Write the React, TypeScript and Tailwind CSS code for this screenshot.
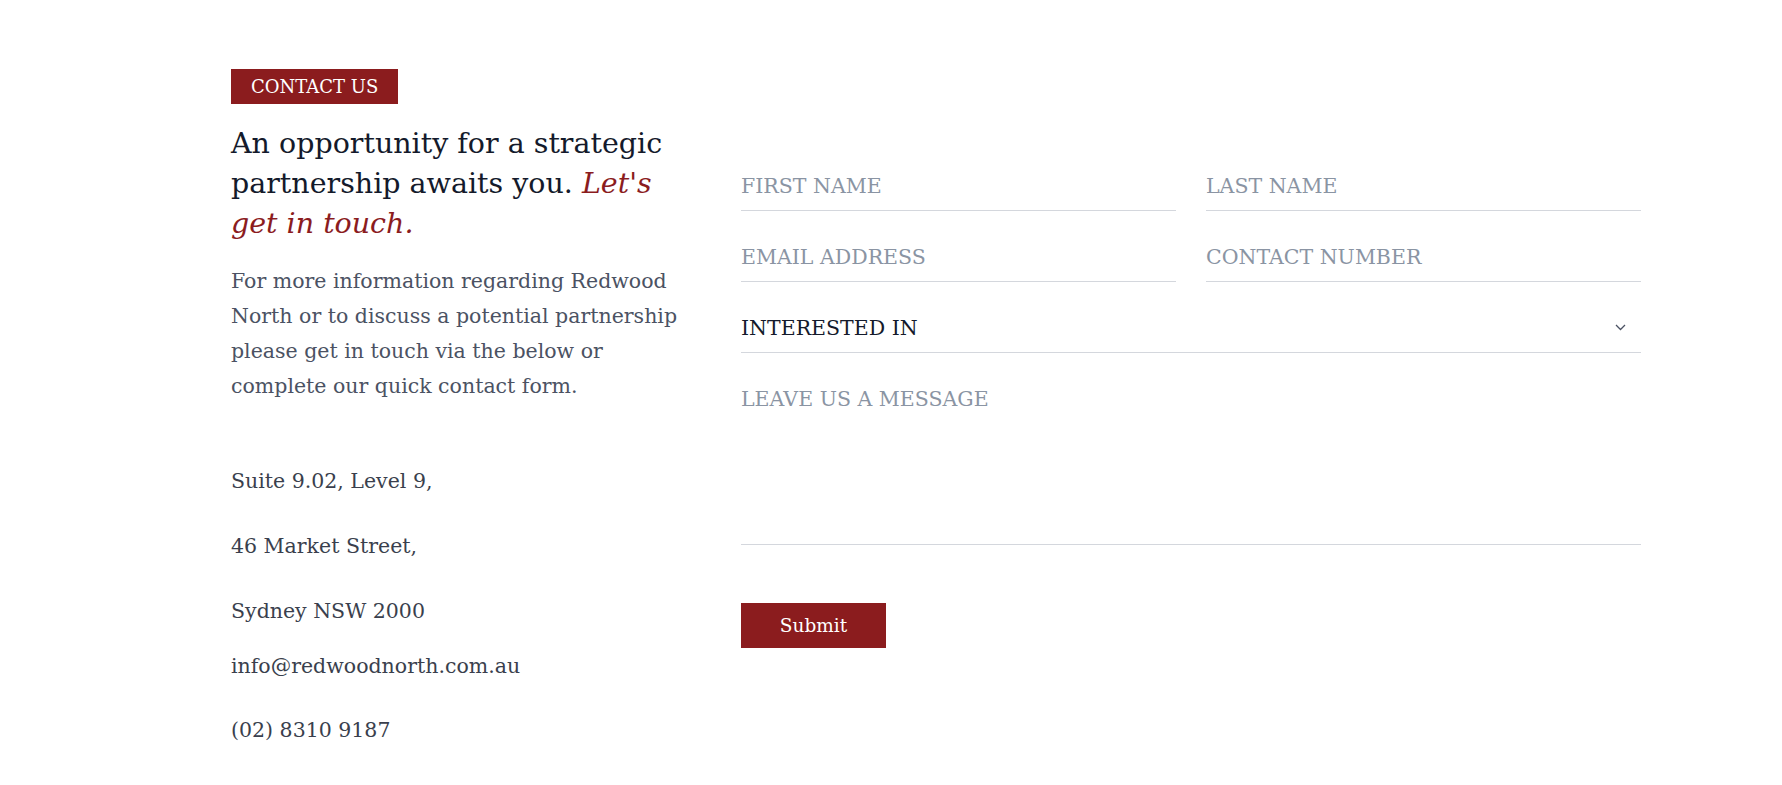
import { useState } from "react";

const SERIF = "font-['DejaVu_Serif',serif]";

const inputCls =
  "w-full h-[51px] pt-[2px] border-0 border-b border-[#d4d7dd] bg-transparent text-[20.5px] text-[#1f2937] placeholder:text-[#8a94a3] outline-none";

function Field({ placeholder, type = "text" }: { placeholder: string; type?: string }) {
  return <input type={type} placeholder={placeholder} className={inputCls} />;
}

export default function App() {
  const [interest, setInterest] = useState("");

  return (
    <div className={`min-h-[785px] bg-white ${SERIF}`}>
      <div className="flex pl-[231px] pt-[69px] pb-[40px] gap-[50px]">
        {/* left column */}
        <div className="w-[460px] shrink-0">
          <span className="inline-flex h-[35px] items-center bg-[#8b1c1e] px-[20px] text-[18px] text-white">
            CONTACT US
          </span>
          <h2 className="mt-[20px] text-[28.5px] leading-[40px] text-[#141a2b]">
            An opportunity for a strategic partnership awaits you.{" "}
            <em className="text-[#8b1c1e]">Let's get in touch.</em>
          </h2>
          <p className="mt-[20px] text-[20.5px] leading-[35px] text-[#4b5263]">
            For more information regarding Redwood North or to discuss a potential partnership
            please get in touch via the below or complete our quick contact form.
          </p>
          <div className="mt-[60px] text-[20.5px] leading-[35px] text-[#3a3f4d]">
            <p>Suite 9.02, Level 9,</p>
            <p className="mt-[30px]">46 Market Street,</p>
            <p className="mt-[30px]">Sydney NSW 2000</p>
            <p className="mt-[20px]">info@redwoodnorth.com.au</p>
            <p className="mt-[29px]">(02) 8310 9187</p>
          </div>
        </div>

        {/* form */}
        <form className="w-[900px] pt-[91px]" onSubmit={(e) => e.preventDefault()}>
          <div className="grid grid-cols-2 gap-x-[30px] gap-y-[20px]">
            <Field placeholder="FIRST NAME" />
            <Field placeholder="LAST NAME" />
            <Field placeholder="EMAIL ADDRESS" type="email" />
            <Field placeholder="CONTACT NUMBER" type="tel" />
          </div>
          <div className="relative mt-[20px]">
            <select
              value={interest}
              onChange={(e) => setInterest(e.target.value)}
              className="w-full h-[51px] pt-[2px] appearance-none border-0 border-b border-[#d4d7dd] bg-transparent text-[20.5px] text-[#141a2b] outline-none"
            >
              <option value="">INTERESTED IN</option>
              <option value="investment">INVESTMENT</option>
              <option value="partnership">PARTNERSHIP</option>
            </select>
            <svg
              className="pointer-events-none absolute right-[15px] top-[22px]"
              width="11"
              height="7"
              viewBox="0 0 11 7"
              fill="none"
            >
              <path d="M1 1l4.5 4.5L10 1" stroke="#4b5263" strokeWidth="1.3" />
            </svg>
          </div>
          <textarea
            placeholder="LEAVE US A MESSAGE"
            className="mt-[20px] block w-full h-[172px] resize-none border-0 border-b border-[#d4d7dd] bg-transparent pt-[14px] text-[20.5px] leading-[24px] text-[#1f2937] placeholder:text-[#8a94a3] outline-none"
          />
          <button
            type="submit"
            className="mt-[58px] h-[45px] w-[145px] bg-[#8b1c1e] text-[18.5px] text-white"
          >
            Submit
          </button>
        </form>
      </div>
    </div>
  );
}
